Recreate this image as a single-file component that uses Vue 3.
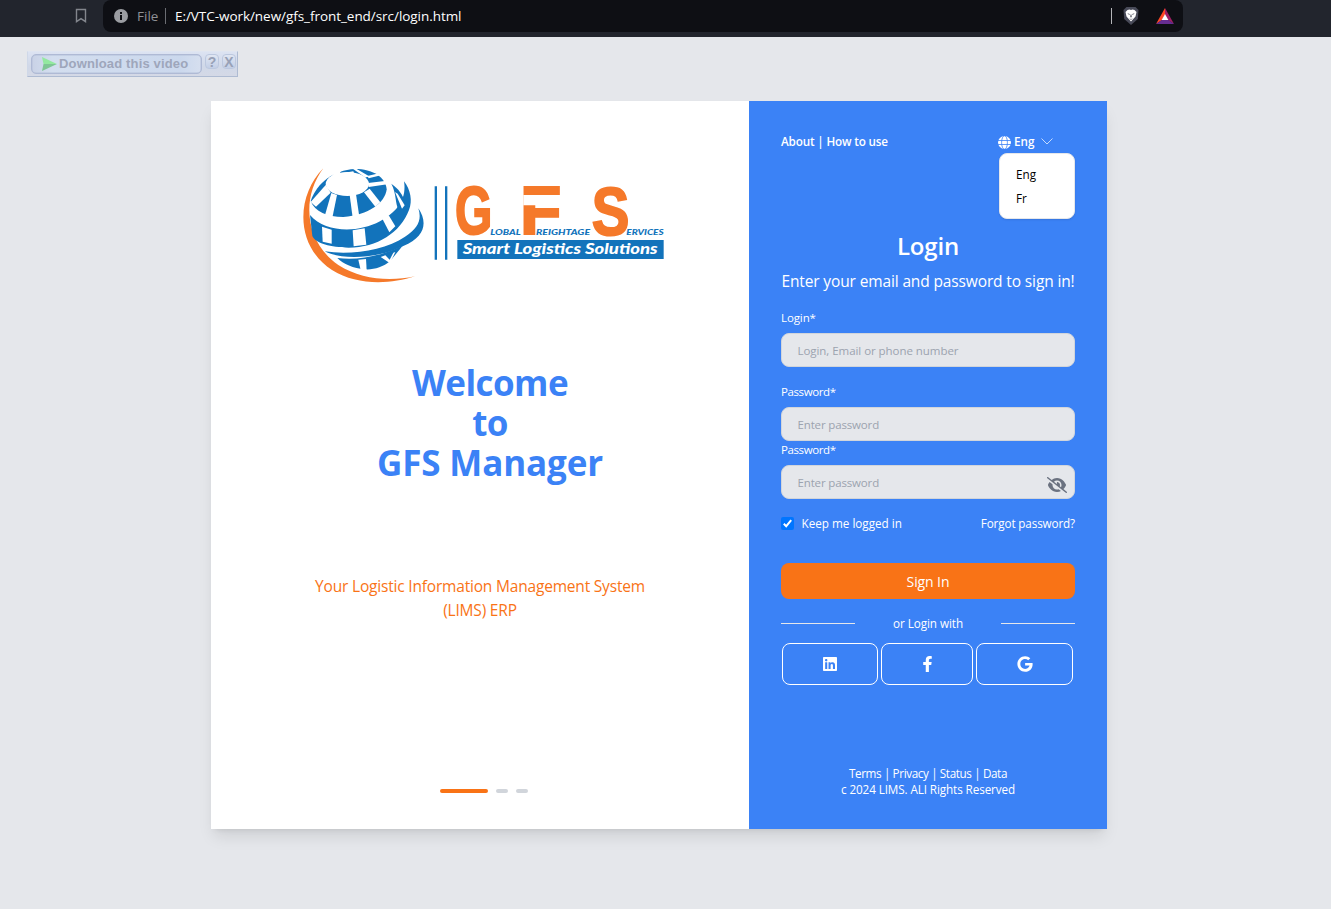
<script setup>
import { ref } from 'vue'

const languages = ['Eng', 'Fr']
const keepLoggedIn = ref(true)
const fields = [
  { label: 'Login*', hint: 'Login, Email or phone number', type: 'text', kind: 'login' },
  { label: 'Password*', hint: 'Enter password', type: 'password', kind: 'pass' },
  { label: 'Password*', hint: 'Enter password', type: 'password', kind: 'confirm' },
]
</script>

<template>
  <div class="screen">
    <header class="browser">
      <svg class="bookmark" viewBox="0 0 12 16"><path d="M1.500 1.500h9v12.200L6 10.600l-4.500 3.100z" fill="none" stroke="#83868d" stroke-width="1.400" /></svg>
      <div class="address">
        <svg class="info" viewBox="0 0 14 14"><circle cx="7" cy="7" r="7" fill="#9b9da2" /><path d="M6 3h2v2H6zM6 6h2v5H6z" fill="#0e0f14" /></svg>
        <span class="scheme">File</span>
        <i class="bar"></i>
        <span class="url">E:/VTC-work/new/gfs_front_end/src/login.html</span>
        <i class="bar bar-right"></i>
        <svg class="lion" viewBox="0 0 16 18">
          <path d="M3.500 0h9l3 3-.7 9L8 18l-6.800-6L.5 3z" fill="#484a58" />
          <path d="M4.500 3L6.500 2.500 8 3 9.500 2.500l2 .5L13.500 5l-1 4.500-2 2.300L8 14.500 5.500 11.800 3.500 9.500 2.500 5z" fill="#fff" />
          <path d="M4.300 6.200l2.500.8-.5 1zM11.700 6.200l-2.500.8.5 1zM7.600 7.500h.8l.3 2.500-.7.600-.7-.6zM6 11.400l2 .7 2-.7-2 1.400z" fill="#484a58" />
        </svg>
        <svg class="bat" viewBox="0 0 18 16">
          <path d="M9 0L0 16l6-4 3-5.500z" fill="#ff4724" />
          <path d="M9 0l9 16-6-4-3-5.500z" fill="#9e1f63" />
          <path d="M0 16h18l-5.600-4H5.600z" fill="#662d91" />
          <path d="M9 6l3.400 6H5.600z" fill="#fff" />
        </svg>
      </div>
    </header>

    <div class="downloader">
      <button class="dl-main">
        <svg viewBox="0 0 15 14"><path d="M0 0l15 7H1.500z" fill="#93e9a0" /><path d="M0 14L15 7H1.500z" fill="#7fc695" /></svg>
        <span>Download this video</span>
      </button>
      <button class="dl-small">?</button>
      <button class="dl-small">X</button>
    </div>

    <main class="card">
      <section class="intro">
        <svg class="logo" viewBox="0 0 1170 420">
          <path d="M100 40C20 120 12 270 126 345C200 392 300 388 375 364C300 380 213 374 145 330C46 262 32 130 100 40Z" fill="#f5792a" />
          <g fill="#1273bb">
            <path d="M62 138C82 82 130 46 195 42C248 42 287 66 290 103C286 143 235 181 160 186C112 186 74 170 62 138Z" />
            <path d="M60 180C105 232 200 236 270 199C328 168 350 126 342 79C362 105 368 138 357 165C332 232 262 278 176 278C122 277 78 266 67 243Z" />
            <path d="M304 86C325 101 340 119 344 143L326 164C315 148 320 115 304 86Z" />
            <path d="M385 160C414 203 405 246 340 273C258 314 150 314 104 289C180 301 285 287 345 245C385 220 396 194 385 160Z" />
            <path d="M142 309C202 317 270 304 338 272L300 319C280 336 250 345 225 343C190 340 160 327 142 309Z" />
          </g>
          <g fill="#fff">
            <ellipse cx="172" cy="87" rx="65" ry="36" />
            <path d="M107 90L122 113L78 155L62 141Z" />
            <path d="M124 114L141 120L127 188L104 184Z" />
            <path d="M179 120L198 118L208 185L188 188Z" />
            <path d="M222 112L239 101L271 142L256 155Z" />
            <path d="M234 84L291 77L292 88L236 96Z" />
            <path d="M118 73L140 44L153 47L147 60Z" />
            <path d="M147 56L190 49L193 58L148 64Z" />
            <path d="M185 39L195 39L240 65L225 67Z" />
            <path d="M232 63L270 54L273 61L236 70Z" />
            <path d="M96 215L125 224L125 266L98 260Z" />
            <path d="M188 226L224 220L229 269L191 274Z" />
            <path d="M277 191L296 181L316 214L298 232Z" />
            <path d="M315 111L323 116L344 151L336 161Z" />
            <path d="M205 314L228 312L230 346L212 345Z" />
            <path d="M272 306L286 301L299 314L310 293L316 291L300 325Z" />
          </g>
          <path d="M434 94h7v220h-7zM465 94h7v220h-7zM502 255h619v57H502z" fill="#1273bb" />
          <g class="initials">
            <text x="495" y="237" textLength="112" lengthAdjust="spacingAndGlyphs">G</text>
            <text x="690" y="237" textLength="124" lengthAdjust="spacingAndGlyphs">F</text>
            <text x="905" y="239" textLength="113" lengthAdjust="spacingAndGlyphs">S</text>
          </g>
          <path d="M700 120h114v31H700z" fill="#fff" />
          <g class="words">
            <text x="601" y="239" textLength="91" lengthAdjust="spacingAndGlyphs">LOBAL</text>
            <text x="738" y="239" textLength="162" lengthAdjust="spacingAndGlyphs">REIGHTAGE</text>
            <text x="1009" y="239" textLength="112" lengthAdjust="spacingAndGlyphs">ERVICES</text>
          </g>
          <text class="slogan" x="518" y="297" textLength="585" lengthAdjust="spacingAndGlyphs">Smart Logistics Solutions</text>
        </svg>
        <h1><span class="w1">Welcome</span><span class="w2">to</span><span class="w3">GFS Manager</span></h1>
        <p class="tagline">Your Logistic Information Management System<br /><span>(LIMS) ERP</span></p>
        <div class="dots"><i class="on"></i><i></i><i></i></div>
      </section>

      <section class="panel">
        <div class="top">
          <nav>About | How to use</nav>
          <div class="lang">
            <svg class="globe" viewBox="0 0 26 26">
              <circle cx="13" cy="13" r="13" fill="#fff" />
              <path d="M0 9h26M0 17h26" fill="none" stroke="#3b82f6" stroke-width="1.600" />
              <ellipse cx="13" cy="13" rx="5.800" ry="13.500" fill="none" stroke="#3b82f6" stroke-width="1.600" />
            </svg>
            <span>Eng</span>
            <svg class="chevron" viewBox="0 0 12 7"><path d="M.5.500L6 6 11.500.500" fill="none" stroke="#c4dafc" stroke-width="1" /></svg>
            <ul class="menu"><li v-for="l in languages" :key="l">{{ l }}</li></ul>
          </div>
        </div>
        <h2>Login</h2>
        <p class="sub">Enter your email and password to sign in!</p>
        <div v-for="f in fields" :key="f.kind" class="field" :class="f.kind">
          <label>{{ f.label }}</label>
          <div class="control">
            <input :type="f.type" :placeholder="f.hint" />
            <svg v-if="f.kind === 'confirm'" class="eye" viewBox="0 0 640 512">
              <path d="M38.800 5.100C28.400-3.100 13.300-1.200 5.100 9.200S-1.200 34.700 9.200 42.900l592 464c10.400 8.200 25.500 6.300 33.700-4.100s6.300-25.500-4.100-33.700L525.600 386.700c39.600-40.600 66.400-86.100 79.900-118.400 3.300-7.900 3.300-16.700 0-24.600-14.900-35.700-46.200-87.700-93-131.100C465.500 68.800 400.800 32 320 32c-68.200 0-125 26.300-169.300 60.800L38.800 5.100zM223.100 149.500C248.600 126.200 282.700 112 320 112c79.500 0 144 64.500 144 144 0 24.900-6.300 48.300-17.400 68.700L408 294.500c8.400-19.300 10.600-41.400 4.800-63.300-11.100-41.500-47.800-69.400-88.600-71.100-5.800-.2-9.200 6.100-7.400 11.700 2.100 6.400 3.300 13.200 3.300 20.300 0 10.200-2.400 19.800-6.600 28.300l-90.300-70.800zM373 389.900c-16.400 6.500-34.300 10.100-53 10.100-79.500 0-144-64.500-144-144 0-6.900.5-13.600 1.400-20.200L83.100 161.500C60.300 191.200 44 220.800 34.500 243.700c-3.300 7.900-3.300 16.700 0 24.600 14.900 35.700 46.200 87.700 93 131.100C174.500 443.200 239.200 480 320 480c47.800 0 89.900-12.900 126.200-32.500L373 389.900z" fill="#6b7280" />
            </svg>
          </div>
        </div>
        <div class="options">
          <label class="keep"><input v-model="keepLoggedIn" type="checkbox" /><svg viewBox="0 0 13 13"><rect width="13" height="13" rx="2" fill="#0075ff" /><path d="M2.800 6.800L5.200 9.200 10.200 3.200" fill="none" stroke="#fff" stroke-width="2" /></svg><span>Keep me logged in</span></label>
          <a class="forgot">Forgot password?</a>
        </div>
        <button class="signin">Sign In</button>
        <div class="divider"><i></i><span>or Login with</span><i></i></div>
        <div class="social">
          <button class="b1"><svg viewBox="0 0 448 512" width="14" height="16"><path d="M416 32H31.900C14.300 32 0 46.500 0 64.300v383.400C0 465.500 14.300 480 31.900 480H416c17.600 0 32-14.500 32-32.300V64.300c0-17.800-14.400-32.300-32-32.300zM135.400 416H69V202.200h66.500V416zm-33.200-243c-21.300 0-38.500-17.300-38.500-38.500S80.900 96 102.200 96c21.200 0 38.500 17.300 38.500 38.500 0 21.300-17.200 38.500-38.500 38.500zm282.100 243h-66.400V312c0-24.800-.5-56.700-34.500-56.700-34.600 0-39.900 27-39.900 54.900V416h-66.400V202.200h63.700v29.200h.9c8.900-16.800 30.600-34.500 62.900-34.500 67.200 0 79.700 44.300 79.700 101.900V416z" /></svg></button>
          <button class="b2"><svg viewBox="0 0 320 512" width="11" height="16"><path d="M279.140 288l14.220-92.660h-88.910v-60.130c0-25.350 12.420-50.060 52.240-50.060h40.420V6.260S260.430 0 225.360 0c-73.220 0-121.080 44.380-121.080 124.720v70.620H22.890V288h81.390v224h100.170V288z" /></svg></button>
          <button class="b3"><svg viewBox="0 0 488 512" width="16" height="16"><path d="M488 261.800C488 403.300 391.100 504 248 504 110.800 504 0 393.200 0 256S110.800 8 248 8c66.800 0 123 24.500 166.300 64.900l-67.500 64.900C258.500 52.600 94.300 116.600 94.300 256c0 86.500 69.100 156.600 153.700 156.600 98.200 0 135-70.400 140.800-106.900H248v-85.300h236.100c2.300 12.700 3.900 24.900 3.900 41.400z" /></svg></button>
        </div>
        <footer><span class="links">Terms | Privacy | Status | Data</span><span>c 2024 LIMS. ALI Rights Reserved</span></footer>
      </section>
    </main>
  </div>
</template>

<style>
body { margin: 0; background: #e5e7eb; }
</style>

<style scoped>
* { box-sizing: border-box; }
.screen { height: 909px; overflow: hidden; background: #e5e7eb; font-family: "Open Sans", "Noto Sans", sans-serif; font-size: 11.7px; line-height: 16px; }
button { font-family: inherit; padding: 0; margin: 0; border: 0; }
svg { display: block; flex: none; }
h1, h2, p, ul { margin: 0; padding: 0; list-style: none; }

.browser { height: 37px; background: #22252d; display: flex; align-items: flex-start; padding-left: 75px; }
.bookmark { width: 12px; height: 16px; margin-top: 8px; }
.address { width: 1080px; height: 32px; margin-left: 16px; background: #0e0f14; border-radius: 8px; display: flex; align-items: center; padding: 0 9px 0 11px; font-size: 13.5px; color: #fff; }
.info { width: 14px; height: 14px; }
.scheme { color: #8f9196; margin-left: 9px; width: 28px; }
.bar { width: 1px; height: 16px; background: #6b6d73; }
.url { margin-left: 9px; letter-spacing: -0.050px; }
.bar-right { margin-left: auto; background: #b4b5b8; }
.lion { width: 16px; height: 18px; margin-left: 11px; }
.bat { width: 18px; height: 16px; margin-left: 17px; }

.downloader { width: 211px; height: 26px; margin: 14px 0 0 27px; background: linear-gradient(#dce3f2, #d0d8e8 60%, #d4d9e6); border: 1px solid #dfe5f1; border-left-color: #cfd8e8; border-right-color: #aebbd2; border-bottom: 1px solid #aebbd2; display: flex; align-items: flex-start; padding: 2px 1px 0 3px; }
.dl-main { width: 171px; height: 20px; border: 1px solid #afbad5; border-radius: 5px; background: linear-gradient(90deg, #c9d2e6, #d3deef 12%, #cbd8ed 88%, #d6dfef); box-shadow: inset 0 0 0 0.500px #b6c1da; display: flex; align-items: center; padding-left: 10px; font: bold 13px/18px "Liberation Sans", Arial, sans-serif; letter-spacing: 0.150px; color: #9ea6bb; white-space: nowrap; }
.dl-main svg { width: 15px; height: 14px; margin-right: 2px; }
.dl-small { width: 14px; height: 15px; margin: 0 0 0 3px; border-radius: 4px; background: linear-gradient(#e0e6f2, #c3cfe6); border: 1px solid #bcc8df; font: bold 14px/14px "Liberation Sans", Arial, sans-serif; color: #98a1b6; text-align: center; }

.card { width: 896px; height: 728px; margin: 24px 0 0 211px; display: flex; box-shadow: 0 10px 15px -3px rgba(0, 0, 0, 0.100), 0 4px 6px -4px rgba(0, 0, 0, 0.100); }
.intro { width: 538px; background: #fff; display: flex; flex-direction: column; }
.logo { width: 390px; height: 140px; margin: 54px 0 0 79px; }
.initials { font: bold 205px "Liberation Sans", Arial, sans-serif; fill: #f5792a; stroke: #f5792a; stroke-width: 6px; }
.words { font: italic 900 25px Lato, sans-serif; fill: #1273bb; }
.slogan { font: italic 900 47px Lato, sans-serif; fill: #fff; }
h1 { margin: 68px 0 0 20px; display: flex; flex-direction: column; align-items: center; font-size: 35px; line-height: 40px; font-weight: 700; color: #3b82f6; }
.w1 { letter-spacing: -0.550px; }
.w2 { letter-spacing: -0.700px; }
.w3 { letter-spacing: -0.150px; }
.tagline { margin-top: 91px; text-align: center; font-size: 15.500px; line-height: 24px; letter-spacing: -0.190px; color: #f97316; }
.dots { margin: auto 0 36px 229px; display: flex; gap: 8px; }
.dots i { width: 12px; height: 4px; border-radius: 2px; background: #d1d5db; }
.dots .on { width: 48px; background: #f97316; }

.panel { width: 358px; padding: 32px 32px 32px; background: #3b82f6; color: #fff; display: flex; flex-direction: column; }
.top { height: 16px; display: flex; justify-content: space-between; font-weight: 600; }
nav { letter-spacing: -0.160px; }
.lang { position: relative; width: 76px; display: flex; align-items: center; }
.globe { width: 13px; height: 13px; margin: 2px 3px 0 -1px; }
.chevron { width: 12px; height: 7px; margin: 0 0 0 7px; }
.menu { position: absolute; z-index: 2; top: 20px; left: 0; width: 76px; height: 66px; padding: 8px 16px; background: #fff; border: 1px solid #e5e7eb; border-radius: 8px; box-shadow: 0 1px 2px rgba(0, 0, 0, 0.100); color: #000; font-weight: 400; line-height: 24px; }
h2 { margin-top: 81px; font-size: 24px; line-height: 32px; font-weight: 600; text-align: center; letter-spacing: -0.200px; }
.sub { margin-top: 7px; text-align: center; font-size: 15.500px; line-height: 24px; letter-spacing: -0.130px; white-space: nowrap; }
.field { margin-top: 17px; font-size: 11.500px; }
.confirm { margin-top: 1px; }
.field label { display: block; letter-spacing: -0.400px; }
.login label { letter-spacing: -0.100px; }
.control { position: relative; margin-top: 7px; height: 34px; }
.control input { width: 100%; height: 34px; display: block; border: 1px solid #d1d5db; border-radius: 8px; background: #e5e7eb; padding: 1px 16px 0 15.500px; font: 11.500px "Open Sans", sans-serif; letter-spacing: -0.150px; outline: 0; }
.login input { letter-spacing: -0.050px; }
.control input::placeholder { color: #9ca3af; opacity: 1; }
.eye { position: absolute; right: 8px; top: 12px; width: 20px; height: 16px; }
.options { margin-top: 16px; height: 16px; display: flex; justify-content: space-between; }
.keep { display: flex; }
.keep input { position: absolute; opacity: 0; pointer-events: none; }
.keep svg { width: 13px; height: 13px; margin: 2px 7.500px 0 0; }
.forgot { letter-spacing: -0.130px; }
.signin { margin-top: 32px; height: 36px; border-radius: 8px; background: #f97316; color: #fff; font-size: 14px; letter-spacing: -0.100px; }
.divider { margin-top: 16px; height: 16px; display: flex; align-items: center; justify-content: space-between; letter-spacing: -0.060px; }
.divider i { width: 73.500px; height: 1px; margin-top: 1px; background: #e5e7eb; }
.social { margin: 12px 0 0 1px; display: flex; gap: 3px; }
.social button { height: 42px; border: 1px solid #fff; border-radius: 8px; background: none; display: flex; align-items: center; justify-content: center; }
.social svg { fill: #fff; }
.b1 { width: 96px; }
.b2 { width: 92px; }
.b3 { width: 97px; }
footer { margin-top: auto; display: flex; flex-direction: column; align-items: center; letter-spacing: -0.100px; }
.links { letter-spacing: -0.380px; }
</style>
